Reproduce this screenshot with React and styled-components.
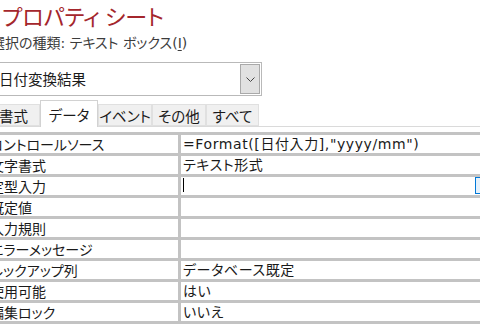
import styled, { createGlobalStyle } from "styled-components";

const GlobalStyle = createGlobalStyle`
  body {
    margin: 0;
    background: #ffffff;
    overflow: hidden;
    font-family: "Noto Sans CJK JP", "Noto Sans", sans-serif;
    font-feature-settings: "palt";
    color: #1a1a1a;
  }
`;

const rows = [
  { label: "コントロールソース", value: '=Format([日付入力],"yyyy/mm")' },
  { label: "文字書式", value: "テキスト形式" },
  { label: "定型入力", value: "", editing: true },
  { label: "既定値", value: "" },
  { label: "入力規則", value: "" },
  { label: "エラーメッセージ", value: "" },
  { label: "ルックアップ列", value: "データベース既定" },
  { label: "使用可能", value: "はい" },
  { label: "編集ロック", value: "いいえ" },
];

const tabs = [
  { name: "書式", w: 53 },
  { name: "データ", w: 58, active: true },
  { name: "イベント", w: 54 },
  { name: "その他", w: 54 },
  { name: "すべて", w: 53 },
];

export default function App() {
  return (
    <>
      <GlobalStyle />
      <Sheet>
        <Title>プロパティ シート</Title>
        <Subtitle>
          選択の種類: テキスト ボックス(<u>I</u>)
        </Subtitle>
        <Combo>
          <ComboText>日付変換結果</ComboText>
          <ComboButton>
            <svg width="9" height="5" viewBox="0 0 9 5">
              <path d="M0.5 0.5 L4.5 4.5 L8.5 0.5" fill="none" stroke="#444" strokeWidth="1" />
            </svg>
          </ComboButton>
        </Combo>
        <TabStrip>
          {tabs.map((t) => (
            <Tab key={t.name} $w={t.w} $active={t.active}>
              {t.name}
            </Tab>
          ))}
        </TabStrip>
        <Grid>
          {rows.map((r) => (
            <Row key={r.label}>
              <Label>{r.label}</Label>
              <Value>
                {r.editing && <Caret />}
                {r.value}
                {r.editing && <Builder />}
              </Value>
            </Row>
          ))}
        </Grid>
      </Sheet>
    </>
  );
}

const Sheet = styled.div`
  width: 510px;
  margin-left: -14px;
`;

const Title = styled.h1`
  margin: 0;
  padding: 0 0 0 16px;
  height: 33px;
  font-size: 22px;
  line-height: 31px;
  font-weight: 400;
  color: #a4262c;
`;

const Subtitle = styled.div`
  padding-left: 5px;
  height: 24px;
  font-family: "DejaVu Sans", "Noto Sans CJK JP", sans-serif;
  font-size: 14px;
  line-height: 21px;
  color: #3c3c3c;

  u {
    text-underline-offset: 2px;
  }
`;

const Combo = styled.div`
  margin-top: 5px;
  margin-left: 4px;
  width: 272px;
  height: 34px;
  box-sizing: border-box;
  border: 1px solid #b9b9b9;
  display: flex;
`;

const ComboText = styled.div`
  flex: 1;
  padding-left: 8px;
  font-size: 14.5px;
  line-height: 31px;
  color: #1a1a1a;
`;

const ComboButton = styled.div`
  width: 18px;
  margin: 1px;
  border: 1px solid #a9a9a9;
  background: #e1e1e1;
  display: flex;
  align-items: center;
  justify-content: center;
`;

const TabStrip = styled.div`
  margin-top: 4px;
  padding-left: 1px;
  height: 26px;
  display: flex;
  align-items: flex-end;
  border-bottom: 1px solid #dadada;
`;

const Tab = styled.div`
  width: ${(p) => p.$w}px;
  box-sizing: border-box;
  height: ${(p) => (p.$active ? 27 : 22)}px;
  margin-bottom: ${(p) => (p.$active ? -1 : 0)}px;
  background: ${(p) => (p.$active ? "#ffffff" : "#f0f0f0")};
  border: 1px solid ${(p) => (p.$active ? "#d2d2d2" : "#e0e0e0")};
  border-bottom: ${(p) => (p.$active ? "none" : "1px solid #e0e0e0")};
  display: flex;
  align-items: center;
  justify-content: center;
  font-size: 14.5px;
  color: #1a1a1a;
  padding-top: ${(p) => (p.$active ? 0 : 1)}px;
`;

const Grid = styled.div`
  margin-top: 5px;
  display: flex;
  flex-direction: column;
  gap: 3px;
  padding: 3px 0;
  background: #c3c3c3;
`;

const Row = styled.div`
  display: grid;
  grid-template-columns: 192px 1fr;
  gap: 3px;
  height: 18px;
`;

const Label = styled.div`
  background: #ffffff;
  padding-left: 4px;
  font-size: 14px;
  line-height: 18px;
  white-space: nowrap;
  overflow: hidden;
`;

const Value = styled.div`
  background: #ffffff;
  padding-left: 2px;
  font-family: "DejaVu Sans", "Noto Sans CJK JP", sans-serif;
  font-size: 14px;
  letter-spacing: 0.6px;
  line-height: 18px;
  white-space: nowrap;
  display: flex;
  align-items: flex-start;
`;

const Caret = styled.span`
  width: 1px;
  height: 14px;
  margin-top: 1px;
  background: #000000;
`;

const Builder = styled.span`
  margin-left: auto;
  width: 21px;
  height: 17px;
  box-sizing: border-box;
  border: 1px solid #0078d7;
  background: #e5f1fb;
`;
